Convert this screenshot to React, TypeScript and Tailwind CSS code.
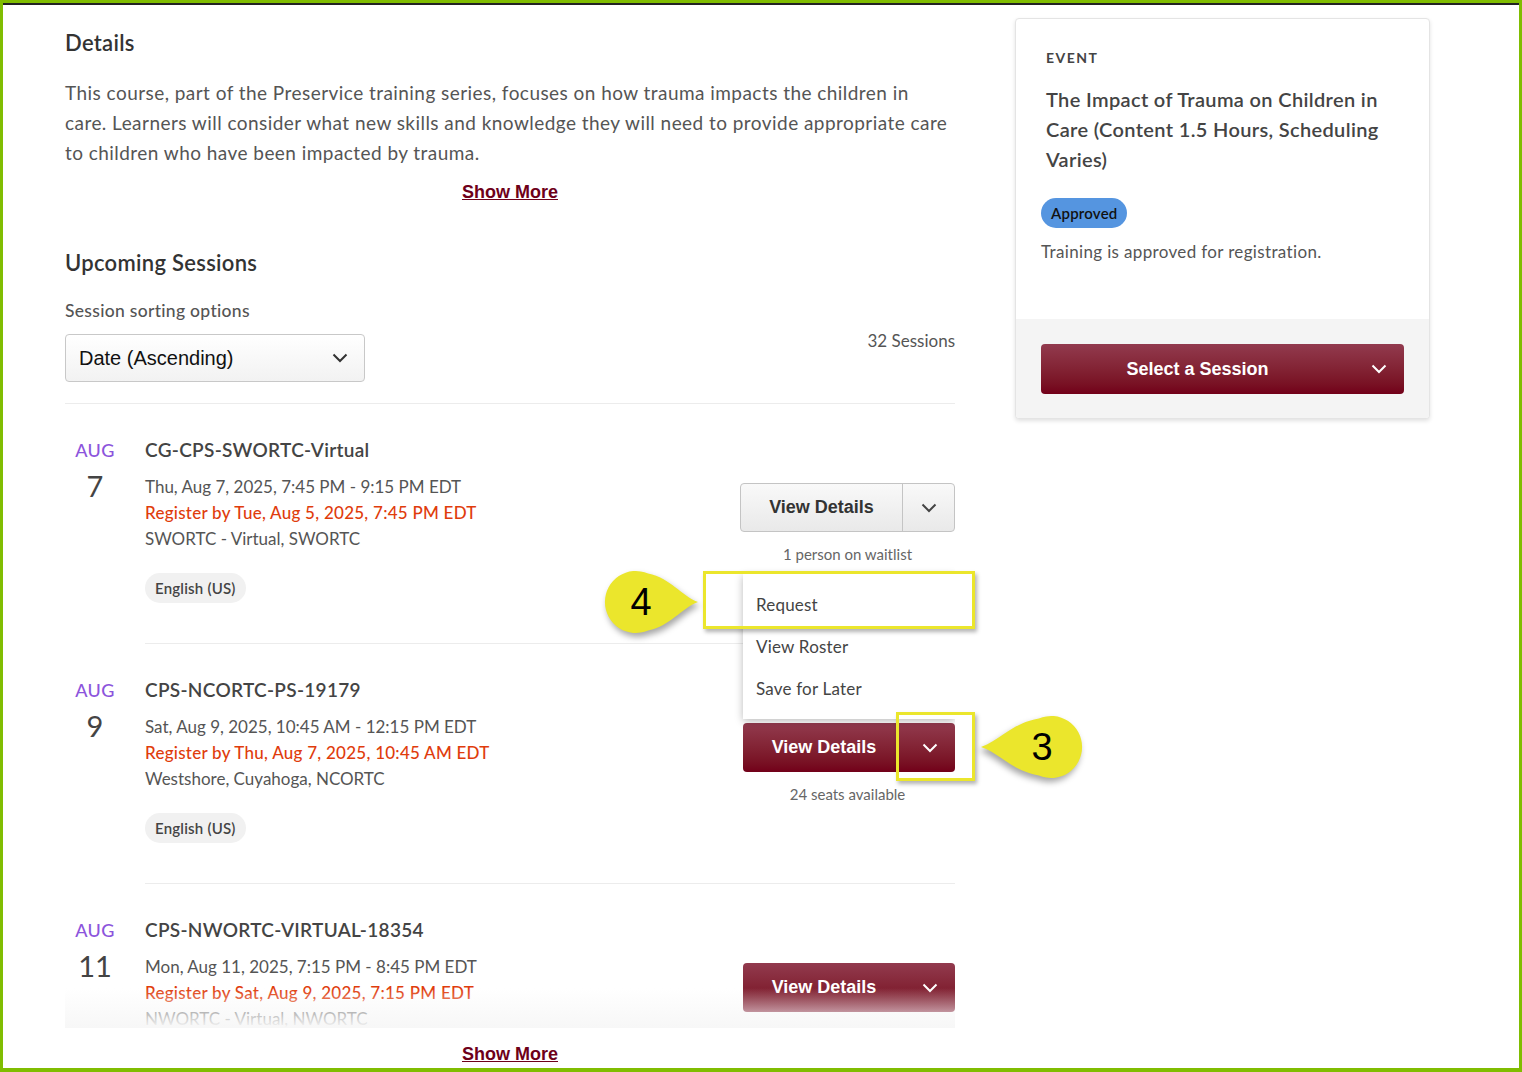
import type { ReactNode } from "react";

type Session = {
  month: string;
  day: string;
  title: string;
  when: string;
  register: string;
  place: string;
  lang: string;
  primary: boolean;
  note: string;
  menuOpen?: boolean;
};

const sessions: Session[] = [
  {
    month: "AUG",
    day: "7",
    title: "CG-CPS-SWORTC-Virtual",
    when: "Thu, Aug 7, 2025, 7:45 PM - 9:15 PM EDT",
    register: "Register by Tue, Aug 5, 2025, 7:45 PM EDT",
    place: "SWORTC - Virtual, SWORTC",
    lang: "English (US)",
    primary: false,
    note: "1 person on waitlist",
  },
  {
    month: "AUG",
    day: "9",
    title: "CPS-NCORTC-PS-19179",
    when: "Sat, Aug 9, 2025, 10:45 AM - 12:15 PM EDT",
    register: "Register by Thu, Aug 7, 2025, 10:45 AM EDT",
    place: "Westshore, Cuyahoga, NCORTC",
    lang: "English (US)",
    primary: true,
    note: "24 seats available",
    menuOpen: true,
  },
  {
    month: "AUG",
    day: "11",
    title: "CPS-NWORTC-VIRTUAL-18354",
    when: "Mon, Aug 11, 2025, 7:15 PM - 8:45 PM EDT",
    register: "Register by Sat, Aug 9, 2025, 7:15 PM EDT",
    place: "NWORTC - Virtual, NWORTC",
    lang: "English (US)",
    primary: true,
    note: "24 seats available",
  },
];

function Chevron({ className = "" }: { className?: string }) {
  return (
    <svg width="16" height="10" viewBox="0 0 16 10" className={className}>
      <path d="M1.5 1.5 L8 8 L14.5 1.5" fill="none" stroke="currentColor" strokeWidth="2" />
    </svg>
  );
}

function SplitButton({ primary }: { primary: boolean }) {
  if (!primary) {
    return (
      <div className="flex h-[49px] w-[215px] rounded-[4px] border border-[#c4c4c4] bg-linear-to-b from-[#f9f9f9] to-[#e9e9e9] font-['Liberation_Sans',Arial,sans-serif] text-[#333]">
        <div className="flex flex-1 items-center justify-center text-[18px] font-bold">View Details</div>
        <div className="flex w-[52px] items-center justify-center border-l border-[#c4c4c4] text-[#444]">
          <Chevron />
        </div>
      </div>
    );
  }
  return (
    <div className="ml-auto flex h-[49px] w-[212px] rounded-[4px] bg-linear-to-b from-[#923a4e] to-[#720019] font-['Liberation_Sans',Arial,sans-serif] text-white">
      <div className="flex flex-1 items-center justify-center text-[18px] font-bold">View Details</div>
      <div className="flex w-[50px] items-center justify-center">
        <Chevron />
      </div>
    </div>
  );
}

function ActionMenu() {
  return (
    <div className="absolute bottom-[calc(100%+4px)] right-0 z-10 w-[212px] bg-white pt-[10px] pb-[9px] shadow-[0_2px_8px_rgba(0,0,0,0.28)]">
      {["Request", "View Roster", "Save for Later"].map((item) => (
        <div key={item} className="flex h-[42px] items-center px-[13px] text-[17px] tracking-[0.2px] text-[#444]">
          {item}
        </div>
      ))}
    </div>
  );
}

function SessionRow({ s }: { s: Session }) {
  return (
    <div className="flex">
      <div className="w-[60px] pt-[34px] text-center">
        <div className="text-[18px] leading-[24px] font-medium tracking-[0.3px] text-[#8c54dc]">{s.month}</div>
        <div className="mt-[8px] text-[29px] leading-[32px] font-normal text-[#444]">{s.day}</div>
      </div>
      <div className="ml-[20px] flex flex-1 justify-between border-b border-[#ececec] pt-[34px] pb-[40px]">
        <div>
          <div className="text-[19px] leading-[24px] font-semibold tracking-[0.3px] text-[#444]">{s.title}</div>
          <div className="mt-[12px] text-[17px] leading-[26px] text-[#555]">
            <div>{s.when}</div>
            <div className="font-medium tracking-[0.25px] text-[#e03c0c]">{s.register}</div>
            <div>{s.place}</div>
          </div>
          <div className="mt-[21px] inline-flex h-[30px] items-center rounded-full bg-[#f1f1f1] px-[10px] text-[15px] font-semibold tracking-[0.2px] text-[#444]">
            {s.lang}
          </div>
        </div>
        <div className="mt-[45px] w-[215px]">
          <div className="relative">
            {s.menuOpen && <ActionMenu />}
            <SplitButton primary={s.primary} />
          </div>
          <div className="mt-[12px] text-center text-[15px] leading-[20px] text-[#666]">{s.note}</div>
        </div>
      </div>
    </div>
  );
}

function ShowMore() {
  return (
    <div className="text-center">
      <a className="font-['Liberation_Sans',Arial,sans-serif] text-[18px] leading-[24px] font-bold text-[#6e0019] underline">
        Show More
      </a>
    </div>
  );
}

function Callout({ className, label, flip, path, w }: { className: string; label: ReactNode; flip?: boolean; path: string; w: number }) {
  return (
    <div className={`absolute ${className}`}>
      <svg width={w} height="74" viewBox={`0 0 ${w} 74`} className={`drop-shadow-[2px_4px_3px_rgba(0,0,0,0.35)] ${flip ? "-scale-x-100" : ""}`}>
        <path d={path} fill="#ebe62c" />
      </svg>
      {label}
    </div>
  );
}

export default function App() {
  return (
    <div className="relative h-[1072px] w-[1522px] bg-[#80bd01] pt-[3px] pr-[3px] pb-[4px] pl-[3px] font-['Lato',sans-serif]">
      <div className="flex h-full overflow-hidden border-t-2 border-[#222] bg-white pl-[62px]">
        {/* left column */}
        <main className="w-[890px] pt-[23px]">
          <h2 className="text-[22px] leading-[30px] font-semibold tracking-[0.3px] text-[#333]">Details</h2>
          <p className="mt-[20px] text-[19px] leading-[30px] tracking-[0.45px] whitespace-nowrap text-[#555]">
            This course, part of the Preservice training series, focuses on how trauma impacts the children in
            <br />
            care. Learners will consider what new skills and knowledge they will need to provide appropriate care
            <br />
            to children who have been impacted by trauma.
          </p>
          <div className="mt-[12px]">
            <ShowMore />
          </div>

          <h2 className="mt-[44px] text-[22px] leading-[30px] font-semibold tracking-[0.3px] text-[#333]">Upcoming Sessions</h2>
          <div className="mt-[21px] flex items-start justify-between">
            <div>
              <div className="text-[17.5px] leading-[24px] font-medium tracking-[0.3px] text-[#555]">Session sorting options</div>
              <div className="mt-[11px] flex h-[48px] w-[300px] items-center justify-between rounded-[4px] border border-[#c8c8c8] bg-linear-to-b from-white to-[#f2f2f2] pr-[16px] pl-[13px]">
                <span className="font-['Liberation_Sans',Arial,sans-serif] text-[20px] text-[#111]">Date (Ascending)</span>
                <Chevron className="text-[#333]" />
              </div>
            </div>
            <div className="mt-[30px] text-[17px] leading-[24px] text-[#555]">32 Sessions</div>
          </div>
          <div className="mt-[21px] border-t border-[#ececec]" />

          <div className="relative h-[624px] overflow-hidden">
            {sessions.map((s) => (
              <SessionRow key={s.title} s={s} />
            ))}
            <div className="absolute inset-x-0 bottom-0 z-20 h-[40px] bg-linear-to-b from-white/0 to-[#f7f7f7]" />
          </div>
          <div className="mt-[14px]">
            <ShowMore />
          </div>
        </main>

        {/* event card */}
        <aside className="mt-[13px] ml-[60px] w-[415px] self-start overflow-hidden rounded-[4px] border border-[#e4e4e4] bg-white shadow-[0_2px_4px_rgba(0,0,0,0.12)]">
          <div className="px-[25px] pt-[29px] pb-[55px]">
            <div className="pl-[5px] text-[14px] leading-[20px] font-bold tracking-[1.5px] text-[#444]">EVENT</div>
            <div className="mt-[16px] pl-[5px] text-[20px] leading-[30px] font-semibold tracking-[0.35px] whitespace-nowrap text-[#444]">
              The Impact of Trauma on Children in
              <br />
              Care (Content 1.5 Hours, Scheduling
              <br />
              Varies)
            </div>
            <div className="mt-[24px] inline-flex h-[30px] items-center rounded-full bg-[#5595e0] px-[10px] text-[15px] font-semibold tracking-[0.2px] text-[#111]">
              Approved
            </div>
            <div className="mt-[12px] text-[17px] leading-[24px] tracking-[0.35px] text-[#555]">Training is approved for registration.</div>
          </div>
          <div className="bg-[#f4f4f4] px-[25px] pt-[25px] pb-[24px]">
            <div className="flex h-[50px] rounded-[4px] bg-linear-to-b from-[#923a4e] to-[#720019] font-['Liberation_Sans',Arial,sans-serif] text-white">
              <div className="flex flex-1 items-center justify-center text-[18px] font-bold">Select a Session</div>
              <div className="flex w-[50px] items-center justify-center">
                <Chevron />
              </div>
            </div>
          </div>
        </aside>
      </div>

      {/* annotations */}
      <div className="absolute top-[571px] left-[703px] z-30 h-[58px] w-[272px] border-[3px] border-[#ebe62c] shadow-[2px_3px_4px_rgba(0,0,0,0.3)]" />
      <div className="absolute top-[712px] left-[896px] z-30 h-[69px] w-[79px] border-[3px] border-[#ebe62c] shadow-[2px_3px_4px_rgba(0,0,0,0.3)]" />
      <Callout
        className="top-[565px] left-[599px] z-30"
        w={105}
        path="M99,37 C82.3,30.8 71.7,13.1 49.1,8.5 A31,31 0 1 0 49.1,65.5 C71.7,60.9 82.3,43.2 99,37 Z"
        label={
          <span className="absolute top-0 left-[5px] flex h-[74px] w-[74px] items-center justify-center font-['Liberation_Sans',Arial,sans-serif] text-[38px] text-black">
            4
          </span>
        }
      />
      <Callout
        className="top-[710px] left-[975px] z-30"
        w={113}
        flip
        path="M107,37 C88.1,30.8 76.2,13.1 49.1,8.5 A31,31 0 1 0 49.1,65.5 C76.2,60.9 88.1,43.2 107,37 Z"
        label={
          <span className="absolute top-0 left-[30px] flex h-[74px] w-[74px] items-center justify-center font-['Liberation_Sans',Arial,sans-serif] text-[38px] text-black">
            3
          </span>
        }
      />
    </div>
  );
}
